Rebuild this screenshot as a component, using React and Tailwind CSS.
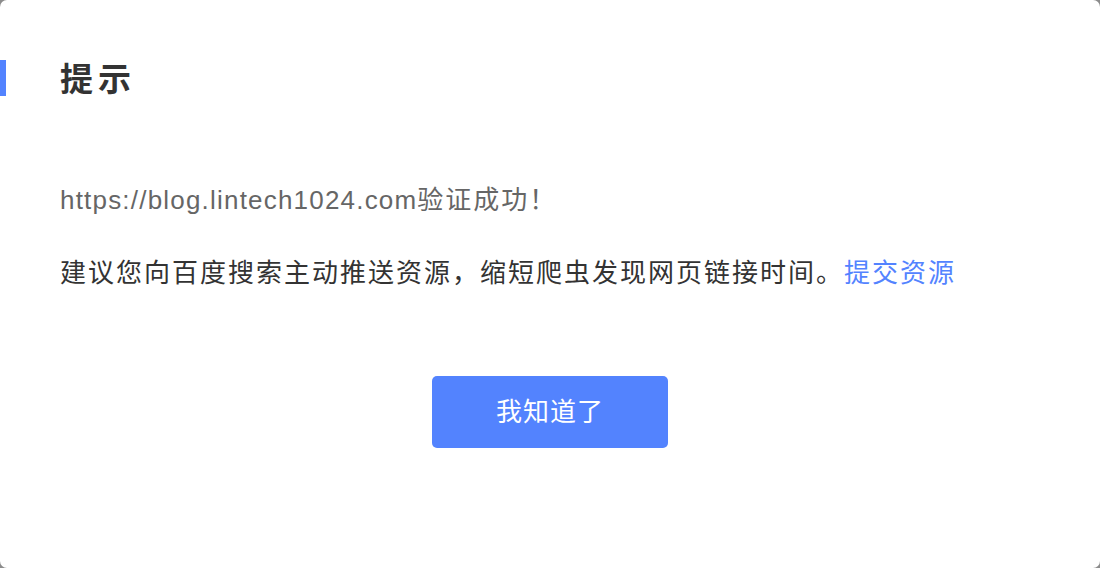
export default function App() {
  const font = { fontFamily: '"Liberation Sans", "Noto Sans CJK SC", sans-serif' };
  return (
    <div className="w-[1100px] h-[568px] bg-[#8c8c8c]" style={font}>
      <div className="w-full h-full bg-white rounded-[7px] flex flex-col pt-[60px]">
        <div className="flex items-center h-[36px]">
          <div className="w-[6px] h-[36px] bg-[#5383ff]"></div>
          <div className="ml-[54px] pt-[4px] text-[33px] font-bold text-[#333333] tracking-[5px] leading-[36px]">提示</div>
        </div>
        <div className="pl-[60px] mt-[86px] text-[26px] leading-[36px] text-[#666666]">
          <span className="tracking-[1.2px]">https://blog.lintech1024.com</span>
          <span className="tracking-[2px]">验证成功！</span>
        </div>
        <div className="pl-[60px] mt-[37px] text-[26px] tracking-[2px] leading-[36px] text-[#333333]">
          建议您向百度搜索主动推送资源，缩短爬虫发现网页链接时间。<span className="text-[#5383ff]">提交资源</span>
        </div>
        <div className="flex justify-center mt-[85px]">
          <button className="w-[236px] h-[72px] rounded-[5px] bg-[#5383fe] text-white text-[26px] tracking-[1px]">
            我知道了
          </button>
        </div>
      </div>
    </div>
  );
}
